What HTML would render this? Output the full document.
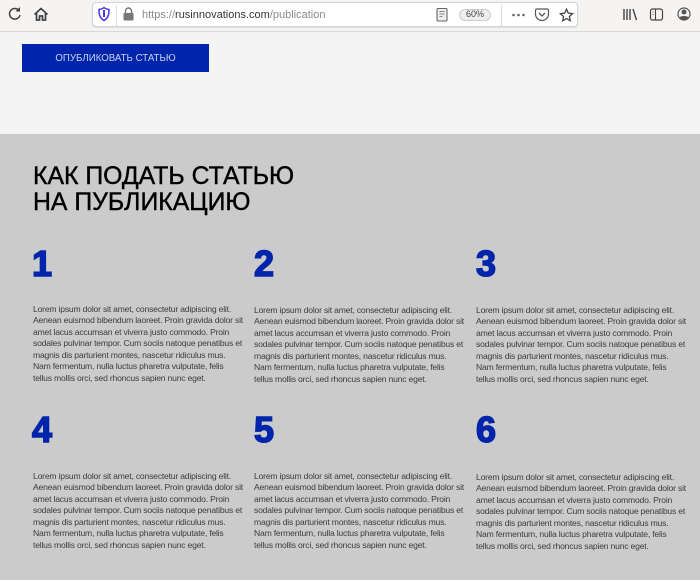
<!DOCTYPE html>
<html><head><meta charset="utf-8"><style>
*{margin:0;padding:0;box-sizing:border-box}
html,body{width:700px;height:580px;overflow:hidden;background:#f4f4f4;font-family:"Liberation Sans",sans-serif}
#bar{position:absolute;left:0;top:0;width:700px;height:32px;background:#f5f4f3;border-bottom:1px solid #d8d8d6}
#url{position:absolute;left:92px;top:2px;width:486px;height:25px;background:#fff;border:1px solid #d4d4d4;border-radius:4px;box-shadow:0 1px 1px #ddd}
.u{position:absolute;left:142px;top:8px;font-size:11px;line-height:14px;color:#8a8a8a;white-space:nowrap;filter:blur(.25px)}
.u b{font-weight:400;color:#333}
#z{position:absolute;left:459px;top:9px;width:32px;height:11.500px;border:1px solid #ccc;border-radius:6px;background:#eee;font-size:9px;line-height:9.500px;text-align:center;color:#444}
svg{position:absolute;left:0;top:0}
#btn{position:absolute;left:22px;top:44px;width:187px;height:28px;background:#0025ab;color:#c9d2ef;font-size:9.700px;line-height:29.500px;text-align:center}
#sec{position:absolute;left:0;top:134px;width:700px;height:446px;background:#cbcbcb}
h1{position:absolute;left:33px;top:164px;font-size:24.800px;line-height:26px;font-weight:400;color:#000;-webkit-text-stroke:.4px #000;white-space:nowrap}
.n{position:absolute;font-size:36px;line-height:40px;font-weight:700;color:#0025ab;-webkit-text-stroke:1.500px #0025ab}
.p{position:absolute;width:230px;font-size:8.600px;letter-spacing:-.2px;line-height:11.450px;color:#3c3c3c;white-space:nowrap;filter:blur(.25px)}
</style></head><body>
<div id="bar"></div><div id="url"></div>
<svg width="700" height="32" fill="none" stroke="#3f3f3f" stroke-width="1.500">
<path d="M19 10.500A5.300 5.300 0 1 0 20 15"/><path d="M20 7v4.500h-4.500" fill="#3f3f3f" stroke="none"/>
<path d="M34.500 14.500L41 8.500l6.500 6M36.500 13v7h3v-4h3v4h3v-7" stroke-width="1.700"/>
<path d="M99 9.500c2-.3 4-1 5-2 1 1 3 1.700 5 2 .3 5-1.500 9-5 11-3.500-2-5.300-6-5-11z" stroke="#4b39e0" stroke-width="1.500"/><path d="M104 10v7" stroke="#4b39e0" stroke-width="2"/>
<path d="M116.500 5v21" stroke="#ddd" stroke-width="1"/>
<path d="M125.500 13v-2a3 3 0 0 1 6 0v2" stroke="#777" stroke-width="1.500"/><rect x="123.500" y="13" width="10" height="7.500" rx="1" fill="#777" stroke="none"/>
<rect x="437" y="8.500" width="10" height="12.500" rx="1" fill="#eee" stroke="#666" stroke-width="1.100"/><path d="M439.500 11.500h5M439.500 14h5M439.500 16.500h3" stroke="#888" stroke-width=".9"/>
<path d="M501.500 5v21" stroke="#d8d8d8" stroke-width="1"/>
<circle cx="513.500" cy="15" r="1.300" fill="#666" stroke="none"/><circle cx="518.500" cy="15" r="1.300" fill="#666" stroke="none"/><circle cx="523.500" cy="15" r="1.300" fill="#666" stroke="none"/>
<path d="M537 9h10c.8 0 1.500.7 1.500 1.500V14a6.500 6.500 0 0 1-13 0v-3.500C535.500 9.700 536.200 9 537 9z" stroke="#555" stroke-width="1.200"/><path d="M539 13l3 3 3-3" stroke="#555" stroke-width="1.300"/>
<path d="M566.500 9.200l1.800 3.900 4.300.5-3.200 2.900.8 4.200-3.700-2.100-3.700 2.100.8-4.200-3.200-2.900 4.300-.5z" stroke="#444" stroke-width="1.300"/>
<path d="M624 9v11M627 9v11M630 9v11M633 9l3.500 11" stroke="#444" stroke-width="1.400"/>
<rect x="650.500" y="9" width="12" height="11" rx="2" stroke="#444" stroke-width="1.200"/><path d="M655.500 9v11" stroke="#444" stroke-width="1.100"/><path d="M652.500 12h1M652.500 14.500h1" stroke="#666" stroke-width="1"/>
<circle cx="684" cy="14" r="6" stroke="#555" stroke-width="1.200"/><circle cx="684" cy="12" r="2.500" fill="#555" stroke="none"/><path d="M679.500 17.500c1-2 8-2 9 0l-1.500 1.500a5 5 0 0 1-6 0z" fill="#555" stroke="none"/>
</svg>
<div class="u">https://<b>rusinnovations.com</b>/publication</div>
<div id="z">60%</div>
<div id="btn">ОПУБЛИКОВАТЬ СТАТЬЮ</div>
<div id="sec"></div>
<h1>КАК ПОДАТЬ СТАТЬЮ<br>НА ПУБЛИКАЦИЮ</h1>
<div class="n" style="left:32px;top:244px">1</div>
<div class="n" style="left:254px;top:244px">2</div>
<div class="n" style="left:476px;top:244px">3</div>
<div class="n" style="left:32px;top:410px">4</div>
<div class="n" style="left:254px;top:410px">5</div>
<div class="n" style="left:476px;top:410px">6</div>
<div class="p" style="left:33px;top:304px">Lorem ipsum dolor sit amet, consectetur adipiscing elit.<br>Aenean euismod bibendum laoreet. Proin gravida dolor sit<br>amet lacus accumsan et viverra justo commodo. Proin<br>sodales pulvinar tempor. Cum sociis natoque penatibus et<br>magnis dis parturient montes, nascetur ridiculus mus.<br>Nam fermentum, nulla luctus pharetra vulputate, felis<br>tellus mollis orci, sed rhoncus sapien nunc eget.</div>
<div class="p" style="left:254px;top:305px">Lorem ipsum dolor sit amet, consectetur adipiscing elit.<br>Aenean euismod bibendum laoreet. Proin gravida dolor sit<br>amet lacus accumsan et viverra justo commodo. Proin<br>sodales pulvinar tempor. Cum sociis natoque penatibus et<br>magnis dis parturient montes, nascetur ridiculus mus.<br>Nam fermentum, nulla luctus pharetra vulputate, felis<br>tellus mollis orci, sed rhoncus sapien nunc eget.</div>
<div class="p" style="left:476px;top:305px">Lorem ipsum dolor sit amet, consectetur adipiscing elit.<br>Aenean euismod bibendum laoreet. Proin gravida dolor sit<br>amet lacus accumsan et viverra justo commodo. Proin<br>sodales pulvinar tempor. Cum sociis natoque penatibus et<br>magnis dis parturient montes, nascetur ridiculus mus.<br>Nam fermentum, nulla luctus pharetra vulputate, felis<br>tellus mollis orci, sed rhoncus sapien nunc eget.</div>
<div class="p" style="left:33px;top:471px">Lorem ipsum dolor sit amet, consectetur adipiscing elit.<br>Aenean euismod bibendum laoreet. Proin gravida dolor sit<br>amet lacus accumsan et viverra justo commodo. Proin<br>sodales pulvinar tempor. Cum sociis natoque penatibus et<br>magnis dis parturient montes, nascetur ridiculus mus.<br>Nam fermentum, nulla luctus pharetra vulputate, felis<br>tellus mollis orci, sed rhoncus sapien nunc eget.</div>
<div class="p" style="left:254px;top:471px">Lorem ipsum dolor sit amet, consectetur adipiscing elit.<br>Aenean euismod bibendum laoreet. Proin gravida dolor sit<br>amet lacus accumsan et viverra justo commodo. Proin<br>sodales pulvinar tempor. Cum sociis natoque penatibus et<br>magnis dis parturient montes, nascetur ridiculus mus.<br>Nam fermentum, nulla luctus pharetra vulputate, felis<br>tellus mollis orci, sed rhoncus sapien nunc eget.</div>
<div class="p" style="left:476px;top:472px">Lorem ipsum dolor sit amet, consectetur adipiscing elit.<br>Aenean euismod bibendum laoreet. Proin gravida dolor sit<br>amet lacus accumsan et viverra justo commodo. Proin<br>sodales pulvinar tempor. Cum sociis natoque penatibus et<br>magnis dis parturient montes, nascetur ridiculus mus.<br>Nam fermentum, nulla luctus pharetra vulputate, felis<br>tellus mollis orci, sed rhoncus sapien nunc eget.</div>
</body></html>
